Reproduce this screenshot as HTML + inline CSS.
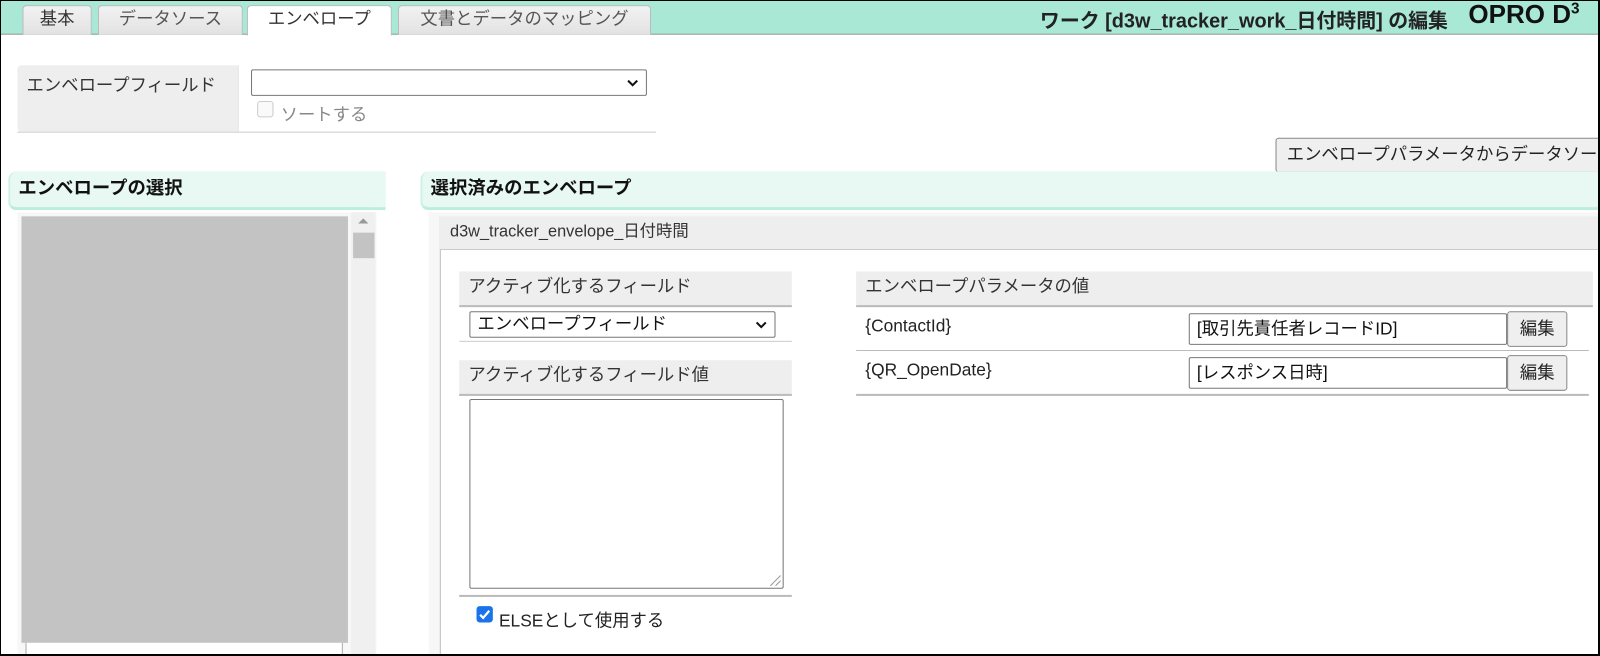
<!DOCTYPE html>
<html><head><meta charset="utf-8"><style>
*{box-sizing:border-box;margin:0;padding:0}
body{width:1600px;height:656px;overflow:hidden;background:#fff;font-family:"Liberation Sans","Noto Sans CJK JP",sans-serif;font-size:17px;color:#222;position:relative}
#w{position:absolute;left:0;top:0;width:1568px;height:643px;transform:scale(1.0204);transform-origin:0 0;overflow:hidden}
.frame{position:absolute;left:0;top:0;width:1600px;height:656px;border:1px solid #000;border-bottom-width:2px;border-right-width:2px;pointer-events:none;z-index:10}
.a{position:absolute}
.hdr{left:0;top:0;width:1568px;height:34px;background:#a8e8d5;border-bottom:1px solid #999}
.tab{position:absolute;top:5px;height:29px;background:linear-gradient(#f2f2f2,#e2e2e2);border:1px solid #bbb;border-bottom:none;border-radius:4px 4px 0 0;text-align:center;line-height:26px;color:#555;font-size:17px}
.sec{height:38px;background:#e8f8f2;border-bottom:3px solid #bdeedd;border-radius:8px 0 0 8px;border-left:2px solid #cdf2e5;font-weight:bold;font-size:18px;line-height:32px;padding-left:8px;color:#111}
.gh{background:#eee;border-bottom:2px solid #bbb;font-size:17px;line-height:30px;padding-left:9px;color:#333}
.sel{background:#fff;border:1px solid #777;border-radius:2px}
.chev{position:absolute;right:7px;top:6px}
.btn{background:#efefef;border:1px solid #888;border-radius:3px;text-align:center}
</style></head><body>
<div id="w">
<div class="a hdr">
<div class="tab" style="left:22px;width:68px;color:#333">基本</div>
<div class="tab" style="left:96px;width:142px">データソース</div>
<div class="tab" style="left:242px;width:142px;background:#fff;height:30px;color:#333">エンベロープ</div>
<div class="tab" style="left:390px;width:248px">文書とデータのマッピング</div>
<div class="a" style="right:149px;top:4px;font-weight:bold;font-size:19.5px;color:#222;white-space:nowrap">ワーク [d3w_tracker_work_日付時間] の編集</div>
<div class="a" style="left:1439px;top:0px;font-weight:bold;font-size:25.5px;color:#111;white-space:nowrap">OPRO D<sup style="font-size:15px">3</sup></div>
</div>

<div class="a" style="left:17px;top:64px;width:626px;height:66px;border-bottom:1px solid #ccc">
<div class="a" style="left:0;top:0;width:217px;height:65px;background:#eee;border-right:1px solid #ddd;border-radius:4px 0 0 4px;padding:5px 0 0 9px;color:#333">エンベロープフィールド</div>
<div class="a sel" style="left:229px;top:4px;width:388px;height:26px"><svg class="chev" width="12" height="12" viewBox="0 0 12 12"><path d="M1.5 4l4.5 4.5L10.5 4" stroke="#111" stroke-width="2" fill="none"/></svg></div>
<div class="a" style="left:235px;top:35px;width:16px;height:16px;border:1px solid #ccc;border-radius:3px;background:#fafafa"></div>
<div class="a" style="left:258px;top:34px;color:#888">ソートする</div>
</div>

<div class="a btn" style="left:1250px;top:135px;width:360px;height:34px;line-height:31px;text-align:left;padding-left:10px;white-space:nowrap;overflow:hidden;color:#222">エンベロープパラメータからデータソース</div>

<div class="a sec" style="left:8px;top:168px;width:370px">エンベロープの選択</div>
<div class="a sec" style="left:412px;top:168px;width:1188px">選択済みのエンベロープ</div>

<div class="a" style="left:17px;top:208px;width:352px;height:448px;background:#f7f7f7"></div>
<div class="a" style="left:21px;top:212px;width:320px;height:418px;background:#c3c3c3"></div>
<div class="a" style="left:25px;top:630px;width:311px;height:20px;border-left:1px solid #aaa;border-right:1px solid #aaa;background:#fff"></div>
<div class="a" style="left:344px;top:208px;width:24px;height:448px;background:#f0f0f0"></div>
<svg class="a" style="left:350px;top:213px" width="12" height="8"><path d="M1 6L6 1L11 6Z" fill="#999"/></svg>
<div class="a" style="left:346px;top:228px;width:21px;height:25px;background:#c3c3c3"></div>

<div class="a" style="left:420px;top:208px;width:1180px;height:448px;background:#f7f7f7"></div>
<div class="a" style="left:431px;top:212px;width:1169px;height:444px;background:#fff;border-left:1px solid #bbb"></div>
<div class="a" style="left:431px;top:212px;width:1169px;height:33px;background:#eee;border-bottom:1px solid #ccc;line-height:32px;padding-left:10px;color:#333;font-size:16px">d3w_tracker_envelope_日付時間</div>

<div class="a gh" style="left:450px;top:266px;width:326px;height:35px">アクティブ化するフィールド</div>
<div class="a sel" style="left:460px;top:305px;width:300px;height:26px;padding-left:7px;line-height:24px;color:#111">エンベロープフィールド<svg class="chev" width="12" height="12" viewBox="0 0 12 12"><path d="M1.5 4l4.5 4.5L10.5 4" stroke="#111" stroke-width="2" fill="none"/></svg></div>
<div class="a" style="left:450px;top:334px;width:326px;height:1px;background:#ccc"></div>
<div class="a gh" style="left:450px;top:353px;width:326px;height:35px">アクティブ化するフィールド値</div>
<div class="a" style="left:460px;top:391px;width:308px;height:186px;border:1px solid #777;border-radius:2px"></div>
<svg class="a" style="left:752px;top:561px" width="14" height="14"><path d="M3 13L13 3M8 13L13 8" stroke="#999"/></svg>
<div class="a" style="left:450px;top:583px;width:326px;height:2px;background:#bbb"></div>
<div class="a" style="left:467px;top:594px;width:16px;height:16px;background:#1a73e8;border-radius:3px"><svg width="16" height="16"><path d="M3.5 8.5l3 3 6-7" stroke="#fff" stroke-width="2.2" fill="none"/></svg></div>
<div class="a" style="left:489px;top:594px;color:#222">ELSEとして使用する</div>

<div class="a gh" style="left:839px;top:266px;width:722px;height:35px">エンベロープパラメータの値</div>
<div class="a" style="left:848px;top:310px;color:#222">{ContactId}</div>
<div class="a sel" style="left:1165px;top:307px;width:312px;height:31px;padding-left:7px;line-height:29px;color:#111">[取引先責任者レコードID]</div>
<div class="a btn" style="left:1477px;top:305px;width:59px;height:35px;line-height:33px">編集</div>
<div class="a" style="left:839px;top:343px;width:718px;height:1px;background:#bbb"></div>
<div class="a" style="left:848px;top:353px;color:#222">{QR_OpenDate}</div>
<div class="a sel" style="left:1165px;top:350px;width:312px;height:31px;padding-left:7px;line-height:29px;color:#111">[レスポンス日時]</div>
<div class="a btn" style="left:1477px;top:348px;width:59px;height:35px;line-height:33px">編集</div>
<div class="a" style="left:839px;top:386px;width:718px;height:2px;background:#bbb"></div>
</div>
<div class="frame"></div>
</body></html>
